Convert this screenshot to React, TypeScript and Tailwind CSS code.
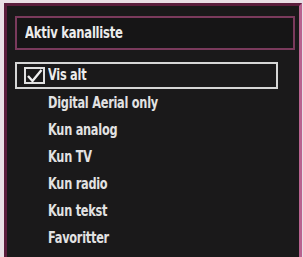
const ITEMS = ['Digital Aerial only', 'Kun analog', 'Kun TV', 'Kun radio', 'Kun tekst', 'Favoritter']

const FONT = { fontFamily: '"DejaVu Sans Condensed", "Liberation Sans", sans-serif' }

export default function App() {
  return (
    <div className="w-[303px] h-[257px] overflow-hidden bg-[#e9dfe5] pt-[3px] pl-[4px] pr-[1px]" style={FONT}>
      <div className="h-[260px] bg-[#1a191a] border-t-[3px] border-l-[3px] border-r-[3px] border-[#5b1d3c] border-r-[#b8628f]">
        {/* title */}
        <div className="mt-[10px] ml-[8px] mr-[4px] h-[34px] border-2 border-[#7a3a5c] bg-[#161516] flex items-center pl-[8px]">
          <span className="inline-block origin-left scale-x-[0.86] text-[15px] font-bold text-[#ececec] tracking-[-0.3px]">
            Aktiv kanalliste
          </span>
        </div>

        {/* selected row */}
        <div className="mt-[12px] ml-[8px] w-[263px] h-[27px] border-2 border-[#d6d6d6] flex items-center pl-[7px] gap-[3px]">
          <div className="w-[21px] h-[17px] border-2 border-[#e0e0e0] flex items-center justify-center">
            <svg width="17" height="14" viewBox="0 0 17 14" fill="none">
              <path d="M2 7 L6.5 12 L15.5 1" stroke="#f0f0f0" strokeWidth="2.4" />
            </svg>
          </div>
          <span className="inline-block origin-left scale-x-[0.84] text-[15px] font-bold text-[#ececec] tracking-[-0.3px]">
            Vis alt
          </span>
        </div>

        {/* items */}
        <div className="ml-[41px] mt-[1px]">
          {ITEMS.map((t) => (
            <div key={t} className="h-[27px] flex items-center">
              <span className="inline-block origin-left scale-x-[0.84] text-[15px] font-bold text-[#e2e2e2] tracking-[-0.3px]">
                {t}
              </span>
            </div>
          ))}
        </div>
      </div>
    </div>
  )
}
